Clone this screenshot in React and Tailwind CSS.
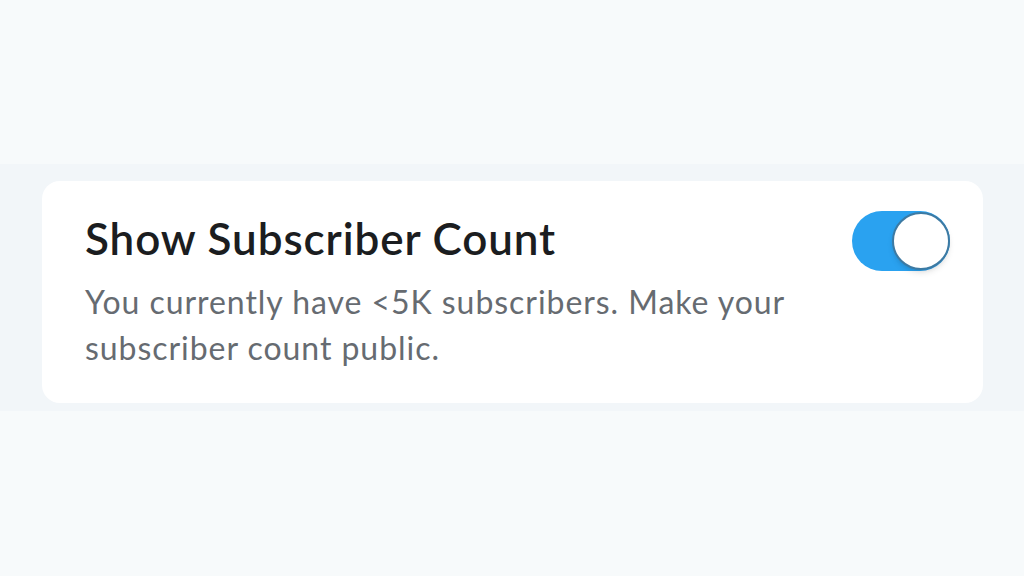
import React from "react";

function Toggle({ on = true }) {
  return (
    <div
      className={`relative w-[98px] h-[60px] rounded-full shrink-0 ${
        on ? "bg-[#2aa2f0]" : "bg-gray-300"
      }`}
    >
      <div
        className={`absolute top-[1px] w-[58px] h-[58px] rounded-full bg-white border-[2px] border-[#3d7aa3] shadow-md ${
          on ? "right-[0px]" : "left-[0px]"
        }`}
      />
    </div>
  );
}

export default function App() {
  return (
    <div className="w-[1024px] h-[576px] bg-[#f7fafb] flex flex-col font-['Lato',sans-serif]">
      <div className="h-[164px]" />
      <div className="h-[247px] bg-[#f2f6f9] px-[42px] pt-[17px]">
        <div className="w-[941px] h-[222px] bg-white rounded-[18px] pl-[43px] pr-[33px] pt-[30px] flex justify-between">
          <div>
            <h2 className="text-[44px] leading-[54px] font-semibold text-[#1b1d20] tracking-[0.9px]">
              Show Subscriber Count
            </h2>
            <p className="mt-[14px] text-[32px] leading-[46px] text-[#666b71] tracking-[0.95px] w-[730px]">
              You currently have &lt;5K subscribers. Make your subscriber count public.
            </p>
          </div>
          <Toggle on />
        </div>
      </div>
      <div className="flex-1" />
    </div>
  );
}
